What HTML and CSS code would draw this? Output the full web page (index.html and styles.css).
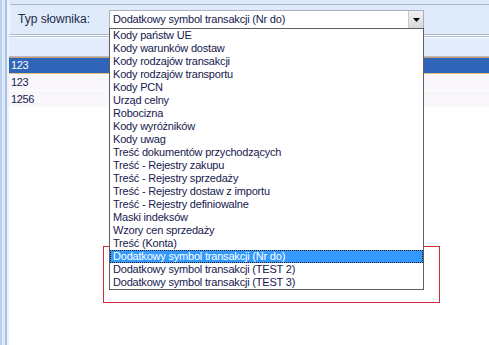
FILE: index.html
```
<!DOCTYPE html>
<html>
<head>
    <meta charset="utf-8">
    <title>Typ słownika</title>
    <link rel="stylesheet" href="styles.css">
</head>
<body>
    <div class="window">
        <div class="side"></div>
        <div class="main">
            <div class="top">
                <div class="toolbar">
                    <span class="label">Typ słownika:</span>
                    <div class="combo">
                        <span class="combo-text">Dodatkowy symbol transakcji (Nr do)</span>
                        <span class="combo-btn">
                            <svg width="7" height="4" viewBox="0 0 7 4"><path d="M0 0h7L3.5 4z" fill="#000"/></svg>
                        </span>
                        <div class="list">
                            <div class="item">Kody państw UE</div>
                            <div class="item">Kody warunków dostaw</div>
                            <div class="item">Kody rodzajów transakcji</div>
                            <div class="item">Kody rodzajów transportu</div>
                            <div class="item">Kody PCN</div>
                            <div class="item">Urząd celny</div>
                            <div class="item">Robocizna</div>
                            <div class="item">Kody wyróżników</div>
                            <div class="item">Kody uwag</div>
                            <div class="item">Treść dokumentów przychodzących</div>
                            <div class="item">Treść - Rejestry zakupu</div>
                            <div class="item">Treść - Rejestry sprzedaży</div>
                            <div class="item">Treść - Rejestry dostaw z importu</div>
                            <div class="item">Treść - Rejestry definiowalne</div>
                            <div class="item">Maski indeksów</div>
                            <div class="item">Wzory cen sprzedaży</div>
                            <div class="item">Treść (Konta)</div>
                            <div class="item selected">Dodatkowy symbol transakcji (Nr do)</div>
                            <div class="item">Dodatkowy symbol transakcji (TEST 2)</div>
                            <div class="item">Dodatkowy symbol transakcji (TEST 3)</div>
                        </div>
                    </div>
                </div>
            </div>
            <div class="grid">
                <div class="grid-head"></div>
                <div class="row selected">123</div>
                <div class="row">123</div>
                <div class="row">1256</div>
            </div>
        </div>
    </div>
    <div class="highlight"></div>
</body>
</html>
```
FILE: styles.css
```
* {
    box-sizing: border-box;
}

body {
    margin: 0;
    background: #fff;
    font-family: 'Liberation Sans', Arial, sans-serif;
    font-size: 11px;
    color: #16204e;
}

.window {
    display: flex;
    height: 345px;
    overflow: hidden;
}

.side {
    width: 9px;
    flex: none;
    background: linear-gradient(to right, #b9cff0 0 2px, #e0e9f8 2px 5px, #a9c0e8 5px 7px, #edf2fb 7px 9px);
}

.main {
    flex: 1;
    background: #fff;
}

.top {
    padding-top: 4px;
    background: #dde8f8;
}

.toolbar {
    display: flex;
    align-items: flex-start;
    height: 31px;
    padding: 5px 0 0 8px;
    background: #dfeafa;
    border-top: 1px solid #a9b8cf;
    border-left: 1px solid #f4f8fe;
    border-bottom: 1px solid #a9b8cf;
    border-top-left-radius: 3px;
}

.label {
    width: 91px;
    flex: none;
    line-height: 19px;
    font-size: 12px;
    color: #1e2a4a;
}

.combo {
    position: relative;
    width: 315px;
    height: 19px;
    display: flex;
    background: #fff;
    border: 1px solid #a8b0bc;
}

.combo-text {
    flex: 1;
    padding-left: 3px;
    line-height: 17px;
    letter-spacing: -0.2px;
    color: #16204e;
}

.combo-btn {
    width: 15px;
    display: flex;
    align-items: center;
    justify-content: center;
    background: linear-gradient(#f2f2f2, #d9d9d9);
    border-left: 1px solid #c8c8c8;
}

.list {
    position: absolute;
    top: 17px;
    left: -1px;
    width: 315px;
    background: #fff;
    border: 1px solid #5e5e5e;
    z-index: 2;
}

.item {
    height: 13px;
    line-height: 13px;
    padding-left: 3px;
    letter-spacing: -0.2px;
    white-space: nowrap;
}

.item.selected {
    background: #3399ff;
    color: #fff;
    outline: 1px dotted #1a1a1a;
    outline-offset: -1px;
}

.grid {
    margin-top: 1px;
    border-top: 1px solid #b3c1d8;
}

.grid-head {
    height: 20px;
    background: #e2ecfa;
    border-top: 1px solid #f6f9fe;
    border-bottom: 1px solid #b8b8c6;
}

.row {
    height: 17px;
    line-height: 17px;
    padding-left: 2px;
    background: #f9f6fc;
    border-bottom: 1px solid #fff;
    letter-spacing: -0.4px;
    color: #16204e;
}

.row.selected {
    background: #3064b8;
    color: #fff;
    border-top: 1px solid #c8a06a;
    border-bottom: 1px solid #e2c27a;
    line-height: 15px;
}

.highlight {
    position: absolute;
    left: 103px;
    top: 246px;
    width: 337px;
    height: 57px;
    border: 1px solid #d02a3c;
}
```
